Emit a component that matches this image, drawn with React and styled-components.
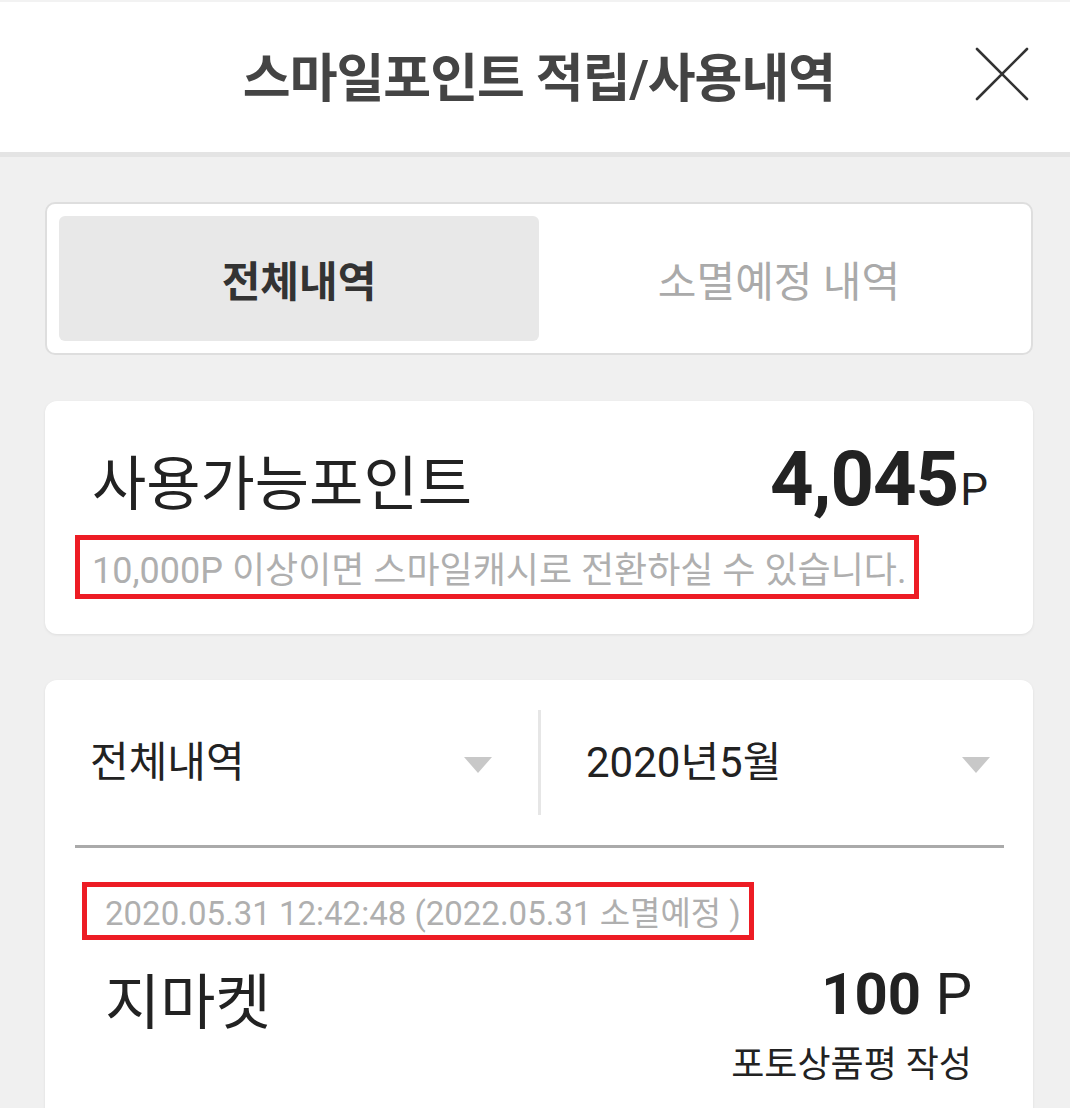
import React from 'react';
import styled, { createGlobalStyle } from 'styled-components';

const GlobalStyle = createGlobalStyle`
  html, body {
    margin: 0;
    padding: 0;
    background: #f0f0f0;
  }
  body {
    font-family: Roboto, "Noto Sans CJK KR", sans-serif;
    color: #222;
  }
`;

const Page = styled.div`
  width: 1070px;
  min-height: 1108px;
  background: #f0f0f0;
  overflow: hidden;
`;

const Header = styled.header`
  display: grid;
  grid-template-columns: 1fr auto 1fr;
  align-items: center;
  height: 150px;
  background: #fff;
  border-top: 2px solid #f2f2f2;
  border-bottom: 5px solid #e4e4e4;
`;

const Title = styled.h1`
  grid-column: 2;
  margin: 0 0 6px 8px;
  font-size: 52px;
  font-weight: 700;
  color: #444;
  letter-spacing: -1px;
`;

const CloseButton = styled.button`
  justify-self: end;
  margin: 0 40px 6px 0;
  padding: 0;
  width: 56px;
  height: 56px;
  border: 0;
  background: none;
  svg {
    display: block;
  }
`;

const Content = styled.main`
  display: flex;
  flex-direction: column;
  gap: 46px;
  padding: 45px 37px 0 45px;
`;

const TabCard = styled.div`
  display: grid;
  grid-template-columns: 1fr 1fr;
  padding: 12px;
  background: #fff;
  border: 2px solid #dedede;
  border-radius: 10px;
`;

const Tab = styled.div`
  display: flex;
  align-items: center;
  justify-content: center;
  height: 125px;
  border-radius: 6px;
  font-size: 42px;
  font-weight: ${({ active }) => (active ? 700 : 400)};
  color: ${({ active }) => (active ? '#333' : '#aaa')};
  background: ${({ active }) => (active ? '#e8e8e8' : 'transparent')};
`;

const Card = styled.section`
  background: #fff;
  border-radius: 12px;
  box-shadow: 0 1px 3px rgba(0, 0, 0, 0.08);
`;

const PointsCard = styled(Card)`
  padding: 42px 45px 35px 30px;
`;

const PointsRow = styled.div`
  display: flex;
  align-items: center;
  justify-content: space-between;
  padding-left: 17px;
  height: 72px;
`;

const PointsLabel = styled.span`
  font-size: 59px;
  color: #222;
`;

const Amount = styled.span`
  font-size: 76px;
  font-weight: 700;
  color: #222;
  letter-spacing: -1px;
  small {
    font-size: 44px;
    font-weight: 400;
    margin-left: 2px;
    letter-spacing: 0;
  }
`;

const Mark = styled.div`
  display: inline-flex;
  align-items: center;
  box-sizing: border-box;
  height: ${({ h }) => h}px;
  padding: 0 8px 0 ${({ pl }) => pl}px;
  border: 5px solid #ed1c24;
  font-size: ${({ size }) => size}px;
  color: #afafaf;
  white-space: nowrap;
`;

const ListCard = styled(Card)`
  padding: 30px 29px 40px 30px;
`;

const FilterRow = styled.div`
  display: grid;
  grid-template-columns: 1fr 3px 1fr;
  height: 105px;
  padding-bottom: 30px;
  border-bottom: 3px solid #aaa;
`;

const Select = styled.div`
  display: flex;
  align-items: center;
  justify-content: space-between;
  padding: 0 ${({ pr }) => pr}px 8px ${({ pl }) => pl}px;
  font-size: 42px;
  color: #222;
`;

const Arrow = styled.span`
  width: 0;
  height: 0;
  border-left: 14px solid transparent;
  border-right: 14px solid transparent;
  border-top: 16px solid #c8c8c8;
  margin-top: 12px;
`;

const Divider = styled.div`
  background: #e6e6e6;
`;

const Entry = styled.div`
  display: flex;
  flex-direction: column;
  padding: 34px 32px 0 7px;
`;

const EntryBody = styled.div`
  display: grid;
  grid-template-columns: 1fr auto;
  margin-top: 14px;
  padding-left: 23px;
`;

const Store = styled.span`
  font-size: 60px;
  color: #222;
`;

const Earned = styled.span`
  justify-self: end;
  margin-top: 6px;
  font-size: 58px;
  font-weight: 700;
  color: #222;
  small {
    font-size: 58px;
    font-weight: 400;
  }
`;

const Reason = styled.span`
  grid-column: 2;
  justify-self: end;
  margin-top: -6px;
  font-size: 36px;
  color: #222;
`;

function CloseIcon() {
  return (
    <svg width="56" height="56" viewBox="0 0 56 56">
      <path d="M3 3 L53 53 M53 3 L3 53" stroke="#333" strokeWidth="2.6" strokeLinecap="round" />
    </svg>
  );
}

export default function App() {
  return (
    <Page>
      <GlobalStyle />
      <Header>
        <Title>스마일포인트 적립/사용내역</Title>
        <CloseButton aria-label="닫기">
          <CloseIcon />
        </CloseButton>
      </Header>
      <Content>
        <TabCard>
          <Tab active>전체내역</Tab>
          <Tab>소멸예정 내역</Tab>
        </TabCard>

        <PointsCard>
          <PointsRow>
            <PointsLabel>사용가능포인트</PointsLabel>
            <Amount>
              4,045<small>P</small>
            </Amount>
          </PointsRow>
          <Mark h={64} pl={12} size={36} style={{ marginTop: 20 }}>
            10,000P 이상이면 스마일캐시로 전환하실 수 있습니다.
          </Mark>
        </PointsCard>

        <ListCard>
          <FilterRow>
            <Select pl={15} pr={46}>
              전체내역
              <Arrow />
            </Select>
            <Divider />
            <Select pl={45} pr={14}>
              2020년5월
              <Arrow />
            </Select>
          </FilterRow>
          <Entry>
            <div>
              <Mark h={58} pl={18} size={33}>
                2020.05.31 12:42:48 (2022.05.31 소멸예정 )
              </Mark>
            </div>
            <EntryBody>
              <Store>지마켓</Store>
              <Earned>
                100 <small>P</small>
              </Earned>
              <Reason>포토상품평 작성</Reason>
            </EntryBody>
          </Entry>
        </ListCard>
      </Content>
    </Page>
  );
}
